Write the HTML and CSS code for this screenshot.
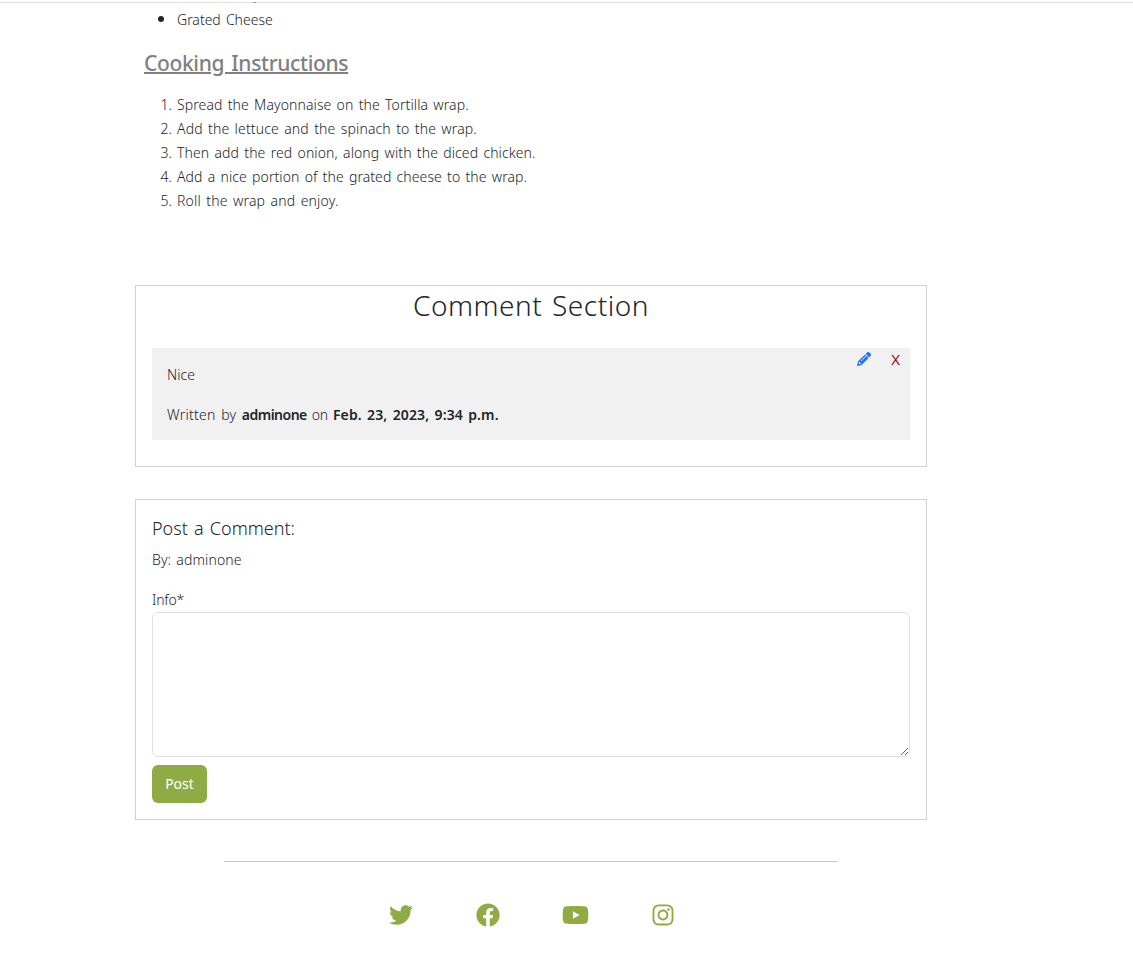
FILE: index.html
```html
<!DOCTYPE html>
<html lang="en">
<head>
<meta charset="utf-8">
<title>Recipe</title>
<link rel="stylesheet" href="styles.css">
</head>
<body>
<div class="topline"><span class="tail"></span></div>
<main class="page">
  <section class="recipe">
    <ul class="list bullets"><li>Grated Cheese</li></ul>
    <h2 class="subhead">Cooking Instructions</h2>
    <ol class="list steps">
      <li><span class="s1">Spread the Mayonnaise on the Tortilla wrap.</span></li>
      <li><span class="s2">Add the lettuce and the spinach to the wrap.</span></li>
      <li><span class="s3">Then add the red onion, along with the diced chicken.</span></li>
      <li><span class="s4">Add a nice portion of the grated cheese to the wrap.</span></li>
      <li><span class="s5">Roll the wrap and enjoy.</span></li>
    </ol>
  </section>
  <section class="box comments">
    <h1 class="title">Comment Section</h1>
    <article class="comment">
      <div class="actions">
        <svg class="pencil" viewBox="0 0 512 512"><path fill="currentColor" d="M410.300 231l11.300-11.300-33.900-33.900-62.100-62.100L291.700 89.800l-11.300 11.300-22.600 22.600L58.600 322.900c-10.400 10.400-18 23.300-22.200 37.400L1 480.700c-2.500 8.400-.2 17.500 6.100 23.700s15.300 8.500 23.700 6.100l120.300-35.400c14.100-4.200 27-11.800 37.400-22.200L387.700 253.700 410.300 231zM160 399.400l-9.100 22.700c-4 3.100-8.500 5.400-13.300 6.900L59.400 452l23-78.100c1.400-4.900 3.800-9.400 6.900-13.300l22.700-9.100v32c0 8.800 7.200 16 16 16h32zM362.700 18.700L348.300 33.200 325.700 55.800 314.300 67.100l33.900 33.900 62.100 62.100 33.900 33.900 11.300-11.300 22.600-22.600 14.500-14.500c25-25 25-65.500 0-90.500L453.300 18.700c-25-25-65.500-25-90.500 0zm-47.400 168l-144 144c-6.200 6.200-16.400 6.200-22.600 0s-6.200-16.400 0-22.600l144-144c6.200-6.200 16.400-6.200 22.600 0s6.200 16.400 0 22.600z"/></svg>
        <span class="remove">X</span>
      </div>
      <p class="body">Nice</p>
      <p class="meta"><span class="m1">Written by </span><strong class="m2">adminone</strong><span class="m3"> on </span><strong class="m4">Feb. 23, 2023, 9:34 p.m.</strong></p>
    </article>
  </section>
  <section class="box post">
    <h3 class="post-title">Post a Comment:</h3>
    <p class="by">By: adminone</p>
    <label class="label" for="info">Info*</label>
    <textarea class="input" id="info"></textarea>
    <button class="btn">Post</button>
  </section>
  <hr class="rule">
  <footer class="social">
    <svg class="ic" viewBox="0 0 512 512"><path d="M459.370 151.716c.325 4.548.325 9.097.325 13.645 0 138.720-105.583 298.558-298.558 298.558-59.452 0-114.680-17.219-161.137-47.106 8.447.974 16.568 1.299 25.340 1.299 49.055 0 94.213-16.568 130.274-44.832-46.132-.975-84.792-31.188-98.112-72.772 6.498.974 12.995 1.624 19.818 1.624 9.421 0 18.843-1.300 27.614-3.573-48.081-9.747-84.143-51.980-84.143-102.985v-1.299c13.969 7.797 30.214 12.670 47.431 13.319-28.264-18.843-46.781-51.005-46.781-87.391 0-19.492 5.197-37.360 14.294-52.954 51.655 63.675 129.300 105.258 216.365 109.807-1.624-7.797-2.599-15.918-2.599-24.040 0-57.828 46.782-104.934 104.934-104.934 30.213 0 57.502 12.670 76.670 33.137 23.715-4.548 46.456-13.320 66.599-25.340-7.798 24.366-24.366 44.833-46.132 57.827 21.117-2.273 41.584-8.122 60.426-16.243-14.292 20.791-32.161 39.308-52.628 54.253z"/></svg>
    <svg class="ic" viewBox="0 0 512 512"><path d="M504 256C504 119 393 8 256 8S8 119 8 256c0 123.780 90.690 226.380 209.250 245V327.690h-63V256h63v-54.640c0-62.150 37-96.480 93.670-96.480 27.140 0 55.520 4.840 55.520 4.840v61h-31.280c-30.800 0-40.410 19.120-40.410 38.730V256h68.780l-11 71.690h-57.780V501C413.310 482.380 504 379.780 504 256z"/></svg>
    <svg class="ic wide" viewBox="0 0 576 512"><path d="M549.655 124.083c-6.281-23.650-24.787-42.276-48.284-48.597C458.781 64 288 64 288 64S117.220 64 74.629 75.486c-23.497 6.322-42.003 24.947-48.284 48.597-11.412 42.867-11.412 132.305-11.412 132.305s0 89.438 11.412 132.305c6.281 23.650 24.787 41.500 48.284 47.821C117.220 448 288 448 288 448s170.780 0 213.371-11.486c23.497-6.321 42.003-24.171 48.284-47.821 11.412-42.867 11.412-132.305 11.412-132.305s0-89.438-11.412-132.305zm-317.510 213.508V175.185l142.739 81.205-142.739 81.201z"/></svg>
    <svg class="ic narrow" viewBox="0 0 448 512"><path d="M224.100 141c-63.600 0-114.900 51.300-114.900 114.900s51.300 114.900 114.900 114.900S339 319.500 339 255.900 287.700 141 224.100 141zm0 189.600c-41.100 0-74.700-33.500-74.700-74.700s33.500-74.700 74.700-74.700 74.700 33.500 74.700 74.700-33.600 74.700-74.700 74.700zm146.400-194.300c0 14.900-12 26.800-26.800 26.800-14.900 0-26.800-12-26.800-26.800s12-26.800 26.800-26.800 26.800 12 26.800 26.800zm76.100 27.200c-1.700-35.900-9.900-67.700-36.200-93.900-26.200-26.200-58-34.400-93.900-36.200-37-2.100-147.900-2.100-184.900 0-35.800 1.700-67.600 9.900-93.900 36.100s-34.400 58-36.200 93.900c-2.100 37-2.100 147.900 0 184.900 1.700 35.900 9.900 67.700 36.200 93.900s58 34.400 93.900 36.200c37 2.100 147.900 2.100 184.900 0 35.900-1.700 67.700-9.900 93.900-36.200 26.200-26.200 34.400-58 36.200-93.900 2.100-37 2.100-147.800 0-184.800zM398.800 388c-7.800 19.600-22.900 34.700-42.600 42.600-29.500 11.700-99.500 9-132.100 9s-102.700 2.600-132.100-9c-19.600-7.800-34.700-22.900-42.600-42.600-11.700-29.500-9-99.500-9-132.100s-2.600-102.700 9-132.100c7.800-19.600 22.900-34.700 42.600-42.600 29.500-11.700 99.500-9 132.100-9s102.700-2.600 132.100 9c19.600 7.800 34.700 22.900 42.600 42.600 11.700 29.500 9 99.500 9 132.100s2.700 102.700-9 132.100z"/></svg>
  </footer>
</main>
</body>
</html>
```
FILE: styles.css
```css
* { box-sizing: border-box; }
body {
  margin: 0;
  height: 955px;
  overflow: hidden;
  background: #fff;
  color: #212529;
  font: 300 14px/24px "Noto Sans", sans-serif;
  word-spacing: 1.5px;
}
p, h1, h2, h3, ul, ol { margin: 0; }
.topline { height: 3px; border-bottom: 1px solid #dcdee0; position: relative; }
.tail { position: absolute; left: 253px; top: 2px; width: 3px; height: 1px; background: #999; }
.page { width: 792px; margin-left: 135px; padding-top: 3px; }
.recipe { padding-left: 9px; height: 279px; }
.list { padding-left: 33px; }
.bullets li::marker { font-size: 18px; }
.bullets { height: 26px; }
.s1 { letter-spacing: 0.1px; }
.s2 { letter-spacing: 0.15px; }
.s3 { letter-spacing: 0.1px; }
.s4 { letter-spacing: 0.08px; }
.s5 { letter-spacing: 0.19px; }
.subhead {
  margin: 16px 0 15px;
  font-size: 21px;
  line-height: 30px;
  font-weight: 500;
  letter-spacing: -0.35px;
  word-spacing: 2px;
  color: #808080;
  text-decoration: underline;
  text-decoration-thickness: 2px;
}
.box { border: 1px solid #ced0d2; padding: 0 16px; }
.comments { height: 182px; }
.title { text-align: center; font-weight: 300; font-size: 28px; line-height: 39px; margin-bottom: 23px; letter-spacing: 0.5px; word-spacing: 2px; }
.comment { position: relative; height: 92px; padding: 15px; background: #f1f1f1; }
.meta { margin-top: 16px; white-space: pre; }
.meta strong { font-weight: 600; }
.m1 { letter-spacing: 0.27px; }
.m2 { letter-spacing: -0.5px; }
.m3 { letter-spacing: -0.2px; }
.m4 { letter-spacing: 0.13px; }
.actions { position: absolute; top: 0; right: 10px; display: flex; align-items: center; gap: 20px; height: 21px; }
.pencil { width: 14px; height: 14px; color: #2470f0; }
.remove { color: #a01010; font-size: 15px; font-weight: 400; }
.post { margin-top: 32px; height: 321px; padding-top: 16px; }
.post-title { font-size: 18px; font-weight: 300; line-height: 24px; margin-bottom: 8px; }
.by { margin-bottom: 16px; letter-spacing: 0.1px; }
.label { display: block; letter-spacing: -0.2px; }
.input { display: block; width: 100%; height: 145px; border: 1px solid #dee2e6; border-radius: 6px; background: #fff; resize: vertical; }
.btn { display: block; margin-top: 8px; width: 55px; height: 38px; padding: 0; border: 0; border-radius: 6px; background: #8fac44; color: #fff; font: 400 14px/24px "Noto Sans", sans-serif; }
.rule { width: 614px; margin: 41px auto 0; border: 0; border-top: 1px solid #c8c9ca; }
.social { display: flex; justify-content: center; gap: 62.5px; margin-top: 41px; padding-left: 1px; }
.ic { width: 24px; height: 24px; fill: #8fac44; }
.wide { width: 27px; }
.narrow { width: 22px; }
```
